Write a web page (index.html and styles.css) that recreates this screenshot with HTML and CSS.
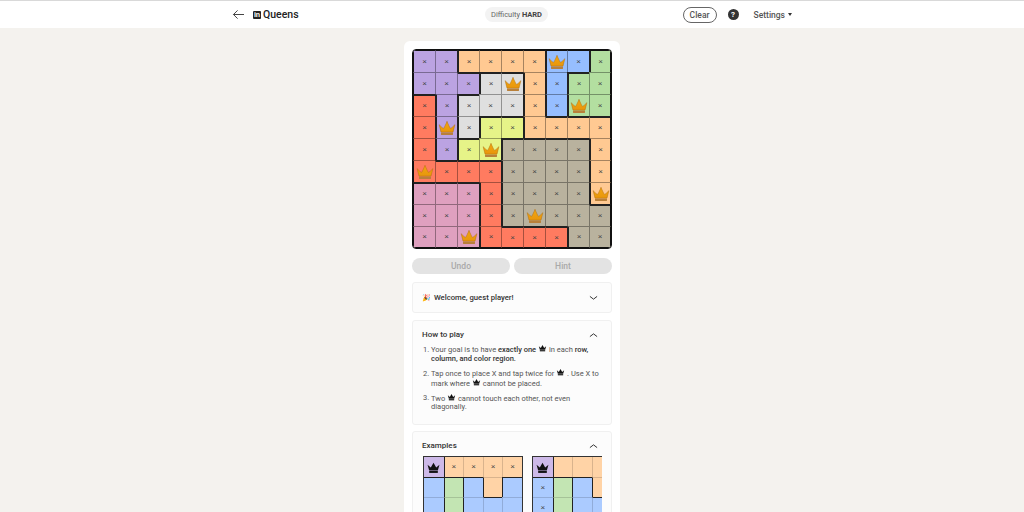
FILE: index.html
```html
<!DOCTYPE html>
<html lang="en">
<head>
<meta charset="utf-8">
<title>Queens</title>
<link rel="stylesheet" href="styles.css">
</head>
<body>
<svg class="defs" width="0" height="0" aria-hidden="true">
  <defs>
    <linearGradient id="gold" x1="0" y1="0" x2="0" y2="1">
      <stop offset="0" stop-color="#f2a60f"/>
      <stop offset="1" stop-color="#e8960c"/>
    </linearGradient>
    <symbol id="crown-gold" viewBox="0 0 24 24">
      <path d="M1.500 7.500C4 10 6 12 7.500 12.500 9 10 10.500 7 12 3 13.500 7 15 10 16.500 12.500 18 12 20 10 22.500 7.500L20 17.500H4Z" fill="url(#gold)" stroke="#a9690f" stroke-width=".6" stroke-linejoin="round"/>
      <rect x="4" y="18" width="16" height="3.200" rx=".6" fill="#b9803a"/>
    </symbol>
    <symbol id="crown-black" viewBox="0 0 24 24">
      <path d="M1 7 7 12 12 3 17 12 23 7 20 17.500H4Z" fill="#111"/>
      <rect x="4" y="18.500" width="16" height="3.500" fill="#111"/>
    </symbol>
  </defs>
</svg>
<header class="topbar">
  <div class="topbar-inner">
    <div class="top-left">
      <svg class="back" viewBox="0 0 14 12" aria-hidden="true"><path d="M13 6H1.500M6 1.500 1.500 6 6 10.500" fill="none" stroke="#333" stroke-width="1"/></svg>
      <span class="li-logo">in</span>
      <span class="title">Queens</span>
    </div>
    <div class="difficulty">Difficulty <b>HARD</b></div>
    <div class="top-right">
      <button class="clear">Clear</button>
      <span class="help">?</span>
      <span class="settings">Settings<i class="caret"></i></span>
    </div>
  </div>
</header>
<main class="page">
  <section class="panel">
    <div class="board" id="board"></div>
    <div class="actions">
      <button class="action">Undo</button>
      <button class="action">Hint</button>
    </div>
    <div class="card welcome">
      <div class="card-head">
        <span class="welcome-text"><span class="party">🎉</span> Welcome, guest player!</span>
        <svg class="chev" viewBox="0 0 10 6" aria-hidden="true"><path d="M1 1.200 5 4.300 9 1.200" fill="none" stroke="#333" stroke-width="1.100"/></svg>
      </div>
    </div>
    <div class="card howto">
      <div class="card-head">
        <span class="card-title">How to play</span>
        <svg class="chev" viewBox="0 0 10 6" aria-hidden="true"><path d="M1 4.800 5 1.700 9 4.800" fill="none" stroke="#333" stroke-width="1.100"/></svg>
      </div>
      <ol class="rules">
        <li>Your goal is to have <b>exactly one</b> <svg class="ic"><use href="#crown-black"/></svg> in each <b>row, column, and color region.</b></li>
        <li>Tap once to place X and tap twice for <svg class="ic"><use href="#crown-black"/></svg> . Use X to mark where <svg class="ic"><use href="#crown-black"/></svg> cannot be placed.</li>
        <li>Two <svg class="ic"><use href="#crown-black"/></svg> cannot touch each other, not even diagonally.</li>
      </ol>
    </div>
    <div class="card examples">
      <div class="card-head">
        <span class="card-title">Examples</span>
        <svg class="chev" viewBox="0 0 10 6" aria-hidden="true"><path d="M1 4.800 5 1.700 9 4.800" fill="none" stroke="#333" stroke-width="1.100"/></svg>
      </div>
      <div class="example-row">
        <div class="example" id="ex1"></div>
        <div class="example" id="ex2"></div>
      </div>
    </div>
  </section>
</main>
<script src="app.js"></script>
</body>
</html>
```
FILE: styles.css
```css
* { box-sizing: border-box; }
html, body { margin: 0; height: 100%; overflow: hidden; }
body { background: #f4f2ee; font-family: Roboto, "Noto Sans", sans-serif; color: #333; }
.defs { position: absolute; }
button { font-family: inherit; }

.topbar { height: 28px; background: #fff; border-top: 1px solid #d9d9d9; }
.topbar-inner { width: 560px; height: 27px; margin: 0 auto; display: grid; grid-template-columns: 1fr auto 1fr; align-items: center; }
.top-left { display: flex; align-items: center; }
.back { width: 13px; height: 11px; margin-right: 8px; }
.li-logo { width: 8px; height: 8px; margin-right: 2px; background: #222; color: #fff; border-radius: 1px; font: 700 7px/8px "Liberation Sans", sans-serif; text-align: center; }
.title { font-size: 10.500px; font-weight: 500; color: #222; }
.difficulty { margin-left: 9px; height: 15px; padding: 0 6px; border-radius: 8px; background: #f3f3f3; font-size: 7.500px; line-height: 15px; color: #666; }
.difficulty b { color: #444; font-weight: 700; }
.top-right { display: flex; align-items: center; justify-content: flex-end; }
.clear { width: 34px; height: 16px; padding: 0; border: 1px solid #666; border-radius: 8px; background: #fff; font-size: 8.500px; font-weight: 500; color: #555; }
.help { width: 11px; height: 11px; margin-left: 11px; border-radius: 50%; background: #333; color: #fff; font-size: 8px; font-weight: 700; line-height: 11px; text-align: center; }
.settings { display: flex; align-items: center; margin-left: 15px; font-size: 8.500px; font-weight: 500; color: #555; }
.caret { width: 0; height: 0; margin-left: 3px; border: 2.500px solid transparent; border-top: 3px solid #333; border-bottom: 0; }

.page { display: flex; justify-content: center; padding: 13px 0 0 0; }
.panel { width: 216px; padding: 8px; background: #fff; border-radius: 6px; }

.board { width: 200px; height: 200px; display: grid; grid-template-columns: repeat(9, 22px); grid-template-rows: repeat(9, 22px); border: 1px solid #111; border-radius: 4px; overflow: hidden; }
.cell { display: flex; align-items: center; justify-content: center; border-left: 1px solid rgba(0,0,0,.35); border-top: 1px solid rgba(0,0,0,.35); font: 8px/1 "Liberation Sans", sans-serif; color: #444; }
.thick-l { border-left: 2px solid #222; }
.thick-t { border-top: 2px solid #222; }
.edge-l { border-left: 1px solid #111; }
.edge-t { border-top: 1px solid #111; }
.edge-r { border-right: 1px solid #111; }
.edge-b { border-bottom: 1px solid #111; }
.p { background: #bba3e2; }
.o { background: #ffc992; }
.u { background: #96beff; }
.g { background: #b3dfa0; }
.w { background: #dfdfdf; }
.r { background: #ff7b60; }
.y { background: #e6f388; }
.t { background: #b9b29e; }
.k { background: #dfa0bf; }
.crown { width: 18px; height: 18px; }

.actions { display: grid; grid-template-columns: 1fr 1fr; gap: 4px; margin-top: 9px; }
.action { height: 16px; padding: 0; border: 0; border-radius: 8px; background: #e3e3e3; color: #a9a9a9; font-size: 8.500px; font-weight: 500; }

.card { margin-top: 8px; padding: 0 9px; background: #fcfcfc; border: 1px solid #f0f0f0; border-radius: 3px; }
.welcome { height: 31px; display: flex; align-items: center; }
.welcome .card-head { width: 100%; }
.card-head { display: flex; align-items: center; justify-content: space-between; padding-right: 4px; }
.welcome-text { font-size: 7.700px; font-weight: 500; color: #333; }
.card-title { font-size: 8px; font-weight: 500; color: #333; }
.party { font-size: 7px; margin-right: 1px; }
.chev { width: 9px; height: 6px; }

.howto { height: 105px; margin-top: 7px; padding-top: 9px; }
.rules { margin: 5px 0 0; padding: 0 0 0 9px; font-size: 7.500px; line-height: 9.200px; color: #555; }
.rules li { margin-bottom: 5.200px; }
.rules b { color: #333; font-weight: 500; }
.ic { width: 9px; height: 8px; vertical-align: -.5px; }

.examples { margin-top: 6px; height: 120px; padding-top: 9px; }
.example-row { display: flex; gap: 9px; width: 179px; margin: 6px 0 0 1px; overflow: hidden; }
.example { flex: none; width: 100px; display: grid; grid-template-columns: repeat(5, 1fr); grid-auto-rows: 20px; border: 1px solid #333; }
.example .cell { border-left: 1px solid rgba(0,0,0,.15); border-top: 1px solid rgba(0,0,0,.15); font-size: 8px; }
.example .cell.thick-l { border-left: 1px solid #222; }
.example .cell.thick-t { border-top: 1px solid #222; }
.example .cell.edge-l { border-left: 0; }
.example .cell.edge-t { border-top: 0; }
.example .cell.edge-r { border-right: 0; }
.example .cell.edge-b { border-bottom: 0; }
.example .crown { width: 13px; height: 13px; }
.example .p { background: #cdb9e8; }
.example .o { background: #ffd3a6; }
.example .u { background: #abcbff; }
.example .g { background: #c3e5b3; }
```
FILE: app.js
```js
function render(el, crown, map, marks) {
  var n = map.length;
  var m = map[0].length;
  for (var i = 0; i < n; i++) {
    for (var j = 0; j < m; j++) {
      var c = document.createElement('div');
      var name = 'cell ' + map[i][j];
      if (j === 0) name += ' edge-l';
      else if (map[i][j] !== map[i][j - 1]) name += ' thick-l';
      if (i === 0) name += ' edge-t';
      else if (map[i][j] !== map[i - 1][j]) name += ' thick-t';
      if (j === m - 1) name += ' edge-r';
      if (i === n - 1) name += ' edge-b';
      c.className = name;
      var mk = marks[i][j];
      if (mk === 'Q') {
        c.innerHTML = '<svg class="crown"><use href="#' + crown + '"/></svg>';
      } else if (mk === 'x') {
        c.textContent = '\u00d7';
      }
      el.appendChild(c);
    }
  }
}
render(document.getElementById('board'), 'crown-gold', [
  'ppoooouug',
  'pppwwougg',
  'rpwwwougg',
  'rpwyyoooo',
  'rpyytttto',
  'rrrrtttto',
  'kkkrtttto',
  'kkkrttttt',
  'kkkrrrrtt'
], [
  'xxxxxxQxx',
  'xxxxQxxxx',
  'xxxxxxxQx',
  'xQxxxxxxx',
  'xxxQxxxxx',
  'Qxxxxxxxx',
  'xxxxxxxxQ',
  'xxxxxQxxx',
  'xxQxxxxxx'
]);
render(document.getElementById('ex1'), 'crown-black',
  ['poooo', 'uguou', 'uguuu', 'uguuu', 'uguuu'],
  ['Qxxxx', '.....', '.....', '.....', '.....']);
render(document.getElementById('ex2'), 'crown-black',
  ['poooo', 'uguoo', 'uguuu', 'uguuu', 'uguuu'],
  ['Q....', 'x....', 'x....', '.....', '.....']);
```
